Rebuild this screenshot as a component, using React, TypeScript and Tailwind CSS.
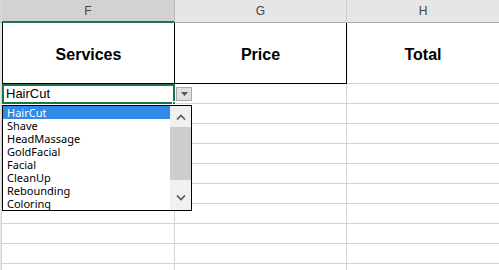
import React from 'react';

const services = ['HairCut', 'Shave', 'HeadMassage', 'GoldFacial', 'Facial', 'CleanUp', 'Rebounding', 'Coloring'];

const Row: React.FC<{ children?: React.ReactNode; h: string }> = ({ children, h }) => (
  <div className={`flex ${h}`}>
    <div className="w-[2px] shrink-0 bg-[#e6e6e6] border-r border-[#d4d4d4]" />
    {children}
  </div>
);

const App: React.FC = () => {
  return (
    <div className="relative w-[499px] h-[270px] overflow-hidden bg-white font-['Liberation_Sans',Arial,sans-serif]">
      {/* column headers */}
      <div className="flex h-[23px]">
        <div className="w-[2px] shrink-0 bg-[#d6d6d6] border-b border-[#ababab]" />
        <div className="w-[173px] shrink-0 flex items-center justify-center bg-[#d2d2d2] border-b-2 border-[#217346] text-[12px] text-[#444] border-r border-r-[#bdbdbd]">F</div>
        <div className="w-[172px] shrink-0 flex items-center justify-center bg-[#e6e6e6] border-b border-[#ababab] border-r border-r-[#d0d0d0] text-[12px] text-[#444]">G</div>
        <div className="flex-1 flex items-center justify-center bg-[#e6e6e6] border-b border-[#ababab] text-[12px] text-[#444]">H</div>
      </div>

      {/* title row */}
      <div className="flex h-[61px]">
        <div className="w-[2px] shrink-0 bg-[#e6e6e6]" />
        <div className="w-[173px] shrink-0 flex items-center justify-center pt-[3px] border-l border-r border-b border-black text-[16px] font-bold text-black">Services</div>
        <div className="w-[172px] shrink-0 flex items-center justify-center pt-[3px] border-r border-b border-black text-[16px] font-bold text-black">Price</div>
        <div className="flex-1 flex items-center justify-center pt-[3px] border-b border-[#d4d4d4] text-[16px] font-bold text-black">Total</div>
      </div>

      {/* selected dropdown row */}
      <Row h="h-[20px]">
        <div className="relative w-[173px] shrink-0 border-2 border-[#217346] flex items-end pl-[2px] text-[13px] leading-[16px] text-black">
          HairCut
          <div className="absolute -right-[3px] -bottom-[3px] w-[4px] h-[4px] bg-[#217346] border border-white" />
        </div>
        <div className="w-[172px] shrink-0 border-r border-b border-[#d4d4d4]" />
        <div className="flex-1 border-b border-[#d4d4d4]" />
      </Row>

      {Array.from({ length: 9 }).map((_, i) => (
        <Row key={i} h="h-[20px]">
          <div className="w-[173px] shrink-0 border-r border-b border-[#d4d4d4]" />
          <div className="w-[172px] shrink-0 border-r border-b border-[#d4d4d4]" />
          <div className="flex-1 border-b border-[#d4d4d4]" />
        </Row>
      ))}

      {/* dropdown arrow button */}
      <div className="absolute left-[176px] top-[87px] w-[16px] h-[14px] bg-[#e1e1e1] border border-[#a9a9a9] flex items-center justify-center">
        <svg width="7" height="4" viewBox="0 0 7 4">
          <path d="M0 0h7L3.5 4z" fill="#555" />
        </svg>
      </div>

      {/* list box */}
      <div className="absolute left-[2px] top-[105px] w-[190px] h-[106px] bg-white border border-black flex font-['Noto_Sans',sans-serif] text-[11px] text-black">
        <div className="flex-1 flex flex-col">
          {services.map((s, i) => (
            <div
              key={s}
              className={`h-[13px] leading-[13px] pl-[4px] ${i === 0 ? 'bg-[#2f8ae8] text-white' : ''}`}
            >
              {s}
            </div>
          ))}
        </div>
        <div className="w-[21px] shrink-0 bg-[#f0f0f0] flex flex-col">
          <div className="h-[21px] flex items-center justify-center">
            <svg width="10" height="6" viewBox="0 0 10 6">
              <path d="M1 5.5L5 1.5l4 4" stroke="#555" strokeWidth="1.6" fill="none" />
            </svg>
          </div>
          <div className="h-[53px] bg-[#cdcdcd]" />
          <div className="flex-1 flex items-center justify-center pt-[6px]">
            <svg width="10" height="6" viewBox="0 0 10 6">
              <path d="M1 0.5L5 4.5l4-4" stroke="#555" strokeWidth="1.6" fill="none" />
            </svg>
          </div>
        </div>
      </div>
    </div>
  );
};

export default App;
